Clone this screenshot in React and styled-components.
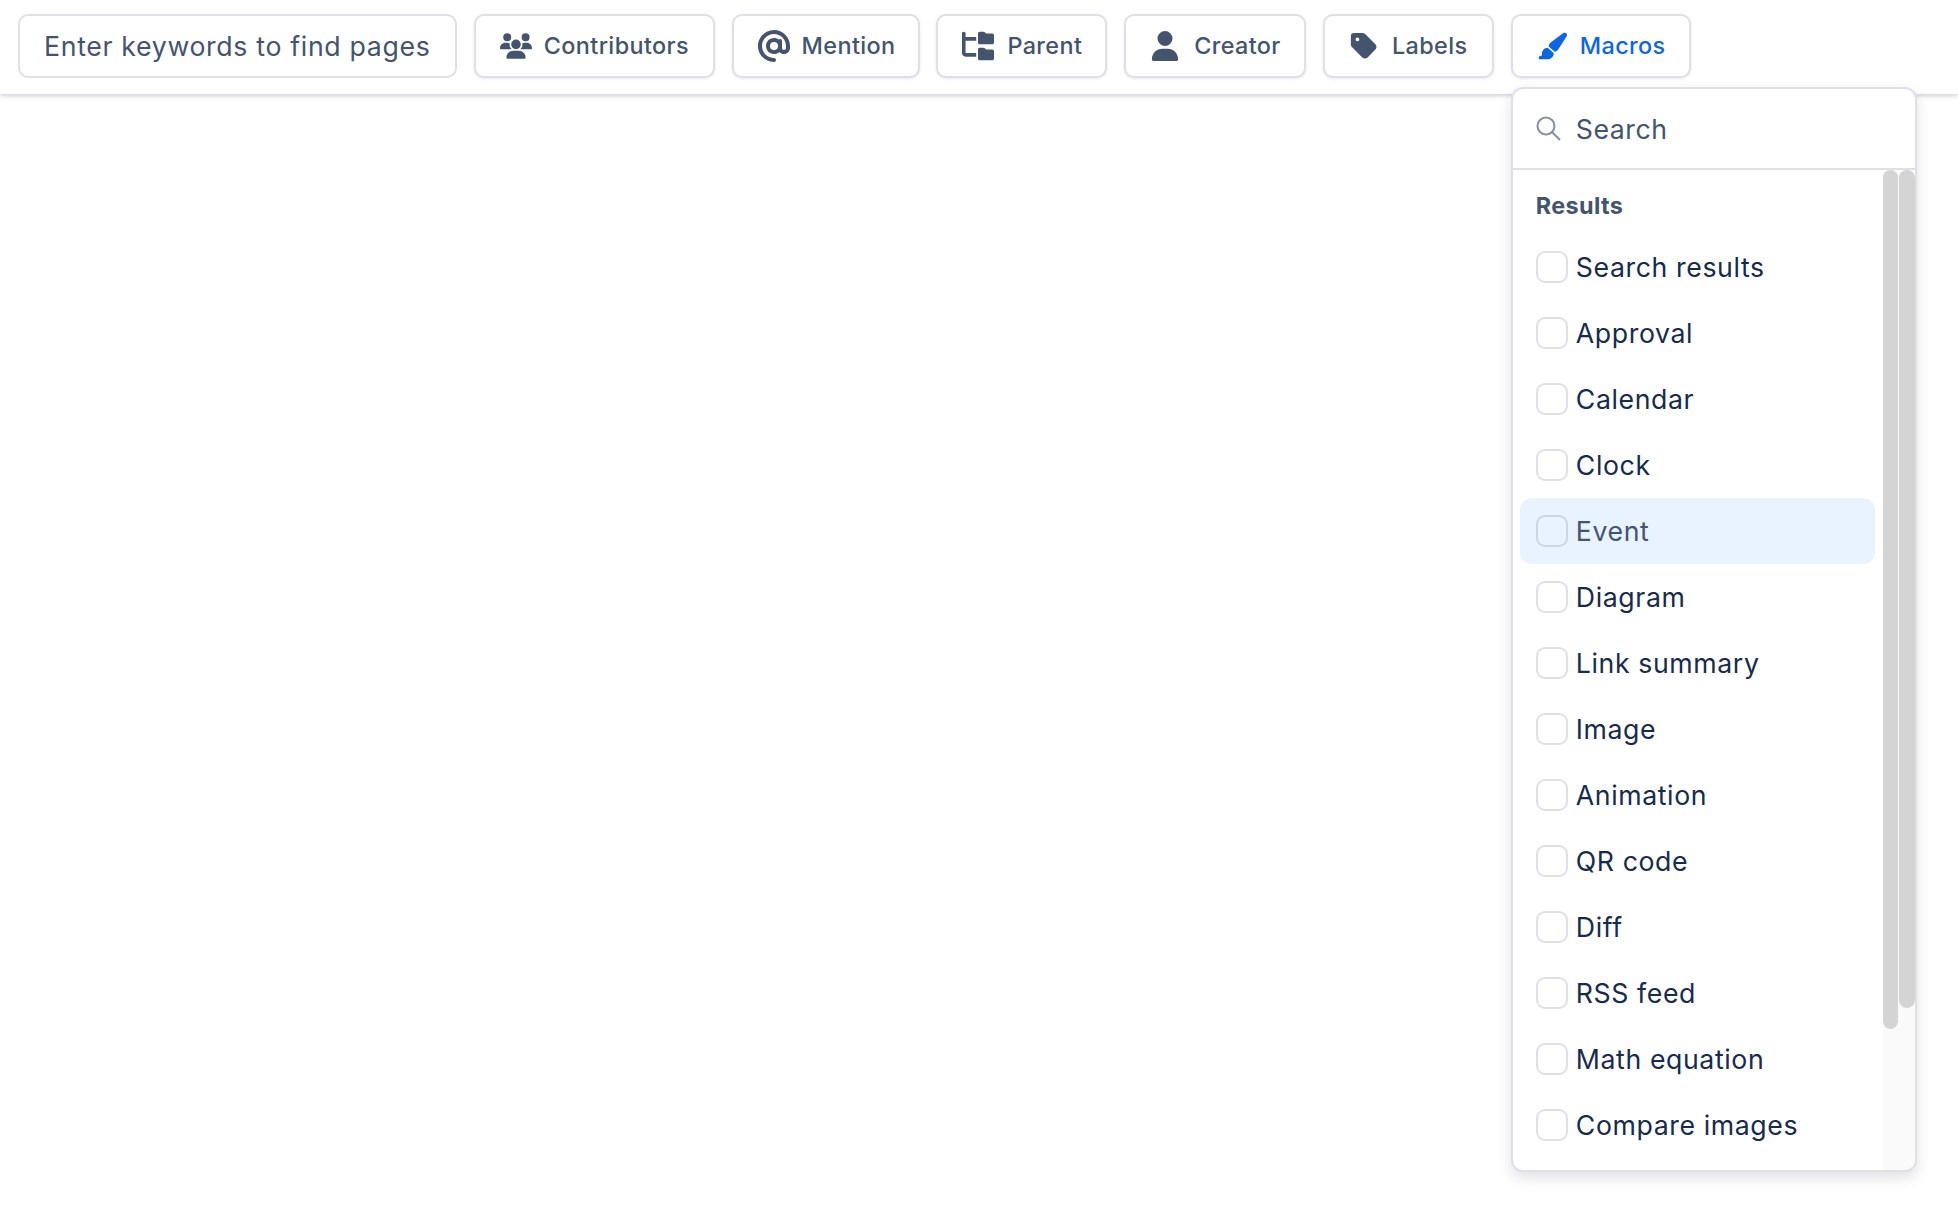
import React from 'react'
import styled, { createGlobalStyle } from 'styled-components'
import { FaUsers, FaAt, FaFolderTree, FaUser, FaTag, FaPaintbrush } from 'react-icons/fa6'

const GlobalStyle = createGlobalStyle`
  html, body {
    margin: 0;
    height: 100%;
    background: #fff;
    font-family: Inter, "Noto Sans", sans-serif;
  }
  * { box-sizing: border-box; }
`

const TopBar = styled.div`
  display: flex;
  align-items: flex-start;
  gap: 16.8px;
  height: 94px;
  padding: 14px 18px 0;
  background: #fff;
  box-shadow: 0 1px 5px rgba(40, 40, 80, 0.3);
`

const KeywordBox = styled.div`
  display: flex;
  align-items: center;
  width: 439px;
  height: 64px;
  padding: 0 24px;
  border: 2px solid #dfdfe8;
  border-radius: 10px;
  font-size: 26.7px;
  letter-spacing: 0.66px;
  color: #44546f;
  white-space: nowrap;
`

const FilterSlot = styled.div`
  position: relative;
`

const FilterButton = styled.div`
  display: flex;
  align-items: center;
  gap: ${props => props.$gap || 14}px;
  height: 64px;
  width: ${props => props.$width}px;
  padding: 0 0 1px 24px;
  border: 2px solid #dfdfe8;
  border-radius: 10px;
  font-size: 23.4px;
  font-weight: 500;
  letter-spacing: 0.38px;
  color: ${props => props.$active ? '#0c66e4' : '#44546f'};
  background: #fff;
  box-shadow: 0 1px 3px rgba(40, 40, 80, 0.1);
  white-space: nowrap;

  svg {
    flex: none;
    font-size: ${props => props.$iconSize || 30}px;
  }
`

const MacroPanel = styled.div`
  position: absolute;
  top: 73px;
  left: 0;
  z-index: 2;
  display: flex;
  flex-direction: column;
  width: 406px;
  height: 1085px;
  background: #fff;
  border: 2px solid #dfdfe8;
  border-radius: 12px;
  box-shadow: 0 6px 14px rgba(40, 40, 80, 0.14);
  overflow: hidden;
`

const SearchRow = styled.div`
  display: flex;
  flex: none;
  align-items: center;
  gap: 15px;
  height: 81px;
  padding-left: 23px;
  border-bottom: 2px solid #dfdfe8;
  font-size: 26.7px;
  letter-spacing: 0.55px;
  color: #44546f;
`

const SearchGlyph = styled.svg`
  flex: none;
  width: 25px;
  height: 25px;
  fill: none;
  stroke: #8590a2;
  stroke-width: 2;
`

const PanelBody = styled.div`
  display: flex;
  flex: 1;
  min-height: 0;
`

const ResultList = styled.div`
  flex: 1;
  padding: 0 8px 0 7px;
`

const GroupTitle = styled.div`
  display: flex;
  align-items: center;
  height: 64px;
  padding: 6px 0 0 16px;
  font-size: 23.4px;
  font-weight: 700;
  letter-spacing: 0.38px;
  color: #44546f;
`

const ResultRow = styled.div`
  display: flex;
  align-items: center;
  gap: 8px;
  height: 66px;
  padding-left: 16px;
  border-radius: 12px;
  font-size: 26.7px;
  letter-spacing: 0.6px;
  color: ${props => props.$hovered ? '#44546f' : '#172b4d'};
  background: ${props => props.$hovered ? '#e9f2ff' : 'transparent'};
`

const Checkbox = styled.span`
  flex: none;
  width: 32px;
  height: 32px;
  border: 2px solid ${props => props.$hovered ? '#cdd4e4' : '#dfdfe8'};
  border-radius: 9px;
`

const ScrollRail = styled.div`
  display: flex;
  flex: none;
  align-items: flex-start;
  gap: 1px;
  width: 32px;
  background: #fafafa;
`

const ScrollThumb = styled.div`
  width: ${props => props.$width}px;
  height: ${props => props.$height}px;
  background: #d4d4d4;
  border-radius: 8px;
`

const filters = [
  { label: 'Contributors', icon: <FaUsers />, width: 241, iconSize: 32, gap: 12 },
  { label: 'Mention', icon: <FaAt />, width: 188, iconSize: 32, gap: 12 },
  { label: 'Parent', icon: <FaFolderTree />, width: 171, iconSize: 32, gap: 13 },
  { label: 'Creator', icon: <FaUser />, width: 182, gap: 14 },
  { label: 'Labels', icon: <FaTag />, width: 171, gap: 13 }
]

const macros = [
  'Search results',
  'Approval',
  'Calendar',
  'Clock',
  'Event',
  'Diagram',
  'Link summary',
  'Image',
  'Animation',
  'QR code',
  'Diff',
  'RSS feed',
  'Math equation',
  'Compare images'
]

const App = () => (
  <>
    <GlobalStyle />
    <TopBar>
      <KeywordBox>Enter keywords to find pages</KeywordBox>
      {filters.map(filter => (
        <FilterSlot key={filter.label}>
          <FilterButton $width={filter.width} $iconSize={filter.iconSize} $gap={filter.gap}>
            {filter.icon}
            {filter.label}
          </FilterButton>
        </FilterSlot>
      ))}
      <FilterSlot>
        <FilterButton $width={180} $gap={13} $active>
          <FaPaintbrush />
          Macros
        </FilterButton>
        <MacroPanel>
          <SearchRow>
            <SearchGlyph viewBox="0 0 25 25">
              <circle cx="10" cy="10" r="8.5" />
              <path d="M16 16l8 8" />
            </SearchGlyph>
            Search
          </SearchRow>
          <PanelBody>
            <ResultList>
              <GroupTitle>Results</GroupTitle>
              {macros.map(name => (
                <ResultRow key={name} $hovered={name === 'Event'}>
                  <Checkbox $hovered={name === 'Event'} />
                  {name}
                </ResultRow>
              ))}
            </ResultList>
            <ScrollRail>
              <ScrollThumb $width={15} $height={859} />
              <ScrollThumb $width={16} $height={838} />
            </ScrollRail>
          </PanelBody>
        </MacroPanel>
      </FilterSlot>
    </TopBar>
  </>
)

export default App
